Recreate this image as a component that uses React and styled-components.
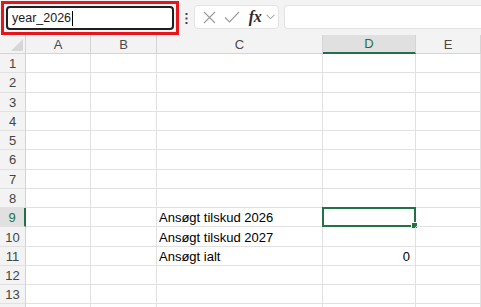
import React from 'react';
import styled, { createGlobalStyle } from 'styled-components';

const GREEN = '#217346';
const GRID = '#e1e1e1';

const Global = createGlobalStyle`
  html, body {
    margin: 0;
    padding: 0;
    background: #fff;
    overflow: hidden;
  }
  body {
    font-family: "Liberation Sans", Arial, sans-serif;
  }
`;

const Root = styled.div`
  width: 481px;
  height: 307px;
  overflow: hidden;
  background: #f3f3f3;
`;

const Toolbar = styled.div`
  height: 35px;
  display: flex;
  align-items: flex-start;
  padding-top: 1px;
  box-sizing: border-box;
`;

const Highlight = styled.div`
  margin-left: 1px;
  width: 178px;
  height: 34px;
  box-sizing: border-box;
  border: 3px solid #e8141c;
  padding: 2px;
`;

const NameBox = styled.div`
  height: 24px;
  box-sizing: border-box;
  border: 2px solid #1f1f1f;
  border-radius: 4px;
  background: #fff;
  display: flex;
  align-items: center;
  padding-left: 4px;
  font-size: 12.5px;
  color: #1a1a1a;
`;

const Caret = styled.span`
  display: inline-block;
  width: 1px;
  height: 15px;
  background: #000;
  margin-left: 1px;
`;

const Dots = styled.div`
  width: 14px;
  height: 34px;
  display: flex;
  align-items: center;
  justify-content: center;
`;

const FxGroup = styled.div`
  margin-top: 4px;
  margin-left: 1px;
  width: 85px;
  height: 24px;
  box-sizing: border-box;
  border: 1px solid #e3e3e3;
  border-radius: 4px;
  background: #fff;
  display: flex;
  align-items: center;
  padding-left: 5px;
`;

const IconSlot = styled.span`
  width: ${p => p.w}px;
  display: flex;
  align-items: center;
  justify-content: center;
`;

const Fx = styled.span`
  font-family: "Liberation Serif", "Times New Roman", serif;
  font-style: italic;
  font-weight: bold;
  font-size: 16px;
  color: #2b2b2b;
  letter-spacing: -0.5px;
`;

const FormulaInput = styled.div`
  margin-top: 4px;
  margin-left: 5px;
  flex: 1;
  height: 24px;
  box-sizing: border-box;
  border: 1px solid #e3e3e3;
  border-right: none;
  border-radius: 4px 0 0 4px;
  background: #fff;
`;

const Sheet = styled.div`
  display: grid;
  grid-template-columns: 26px 65px 66px 166px 93px 1fr;
  grid-template-rows: 19px;
  grid-auto-rows: 19.28px;
  background: #fff;
  font-size: 13px;
`;

const Corner = styled.div`
  background: #f3f3f3;
  border-right: 1px solid #d4d4d4;
  border-bottom: 1px solid #d4d4d4;
  box-sizing: border-box;
  display: flex;
  align-items: flex-end;
  justify-content: flex-end;
  padding: 0 2px 2px 0;
`;

const ColHead = styled.div`
  background: ${p => (p.active ? '#e0e0e0' : '#f3f3f3')};
  border-right: 1px solid #d4d4d4;
  border-bottom: ${p => (p.active ? `2px solid ${GREEN}` : '1px solid #d4d4d4')};
  box-sizing: border-box;
  display: flex;
  align-items: center;
  justify-content: center;
  color: ${p => (p.active ? GREEN : '#4a4a4a')};
  line-height: 1;
`;

const RowHead = styled.div`
  background: ${p => (p.active ? '#e0e0e0' : '#f3f3f3')};
  border-right: ${p => (p.active ? `2px solid ${GREEN}` : '1px solid #d4d4d4')};
  border-bottom: 1px solid ${GRID};
  box-sizing: border-box;
  display: flex;
  align-items: center;
  justify-content: center;
  color: ${p => (p.active ? GREEN : '#444')};
  line-height: 1;
  padding-top: 1px;
`;

const Cell = styled.div`
  position: relative;
  border-right: 1px solid ${GRID};
  border-bottom: 1px solid ${GRID};
  box-sizing: border-box;
  display: flex;
  align-items: center;
  justify-content: ${p => (p.right ? 'flex-end' : 'flex-start')};
  padding: 1px 5px 0 2px;
  color: #000;
  white-space: nowrap;
  line-height: 1;
`;

const Selection = styled.div`
  position: absolute;
  left: -1px;
  top: -1px;
  right: -1px;
  bottom: -1px;
  border: 2px solid ${GREEN};
  pointer-events: none;
`;

const Handle = styled.div`
  position: absolute;
  right: -4px;
  bottom: -4px;
  width: 5px;
  height: 5px;
  background: ${GREEN};
  border: 1px solid #fff;
`;

const columns = ['A', 'B', 'C', 'D', 'E'];

const data = {
  9: { C: 'Ansøgt tilskud 2026' },
  10: { C: 'Ansøgt tilskud 2027' },
  11: { C: 'Ansøgt ialt', D: '0' },
};

const CloseIcon = () => (
  <svg width="13" height="13" viewBox="0 0 13 13">
    <path d="M1 1 L12 12 M12 1 L1 12" stroke="#9a9a9a" strokeWidth="1.1" fill="none" />
  </svg>
);

const CheckIcon = () => (
  <svg width="16" height="12" viewBox="0 0 16 12">
    <path d="M1 6.5 L5.5 11 L15 1" stroke="#9a9a9a" strokeWidth="1.1" fill="none" />
  </svg>
);

const ChevronIcon = () => (
  <svg width="9" height="6" viewBox="0 0 9 6">
    <path d="M0.5 0.8 L4.5 4.8 L8.5 0.8" stroke="#8a8a8a" strokeWidth="1" fill="none" />
  </svg>
);

const MoreIcon = () => (
  <svg width="3" height="11" viewBox="0 0 3 11">
    <rect x="0.5" y="0" width="2" height="2" fill="#444" />
    <rect x="0.5" y="4.5" width="2" height="2" fill="#444" />
    <rect x="0.5" y="9" width="2" height="2" fill="#444" />
  </svg>
);

const SelectAll = () => (
  <svg width="12" height="12" viewBox="0 0 12 12">
    <path d="M12 0 L12 12 L0 12 Z" fill="#d6d6d6" />
  </svg>
);

// rows 1-13 are fully visible; row 14 only peeks in at the bottom edge
const VISIBLE_ROWS = 13;

function App() {
  const rows = Array.from({ length: VISIBLE_ROWS + 1 }, (_, i) => i + 1);
  return (
    <Root>
      <Global />
      <Toolbar>
        <Highlight>
          <NameBox>
            year_2026
            <Caret />
          </NameBox>
        </Highlight>
        <Dots>
          <MoreIcon />
        </Dots>
        <FxGroup>
          <IconSlot w={19}><CloseIcon /></IconSlot>
          <IconSlot w={26}><CheckIcon /></IconSlot>
          <IconSlot w={20}><Fx>fx</Fx></IconSlot>
          <IconSlot w={10}><ChevronIcon /></IconSlot>
        </FxGroup>
        <FormulaInput />
      </Toolbar>
      <Sheet>
        <Corner><SelectAll /></Corner>
        {columns.map(c => (
          <ColHead key={c} active={c === 'D'}>{c}</ColHead>
        ))}
        {rows.map(r => (
          <React.Fragment key={r}>
            <RowHead active={r === 9}>{r <= VISIBLE_ROWS ? r : null}</RowHead>
            {columns.map(c => {
              const value = data[r] && data[r][c];
              const selected = r === 9 && c === 'D';
              return (
                <Cell key={c} right={c === 'D'}>
                  {value}
                  {selected && (
                    <Selection>
                      <Handle />
                    </Selection>
                  )}
                </Cell>
              );
            })}
          </React.Fragment>
        ))}
      </Sheet>
    </Root>
  );
}

export default App;
